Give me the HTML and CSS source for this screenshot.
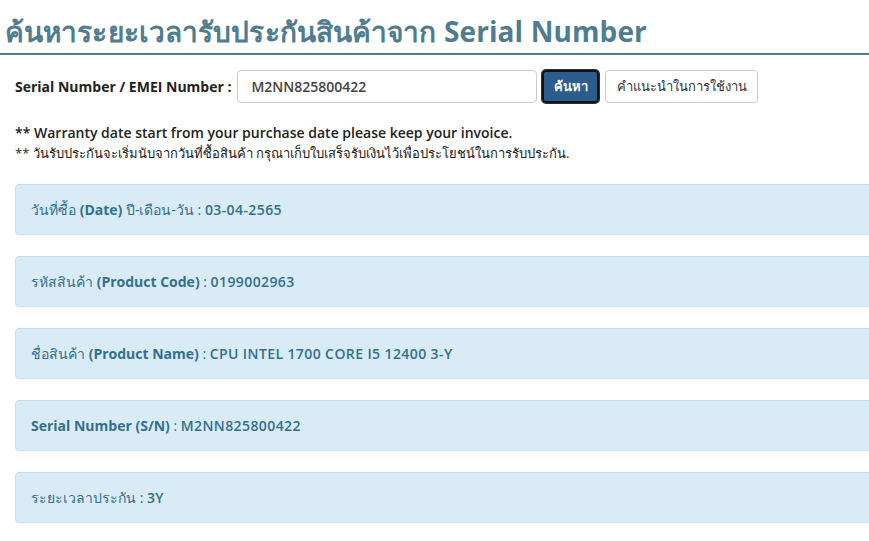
FILE: index.html
```html
<!DOCTYPE html>
<html lang="th">
<head>
<meta charset="utf-8">
<title>ค้นหาระยะเวลารับประกันสินค้า</title>
<link rel="stylesheet" href="styles.css">
</head>
<body>
<div class="page">
  <h1 class="title">ค้นหาระยะเวลารับประกันสินค้าจาก Serial Number</h1>
  <form class="search-row">
    <label class="search-label" for="sn">Serial Number / EMEI Number :</label>
    <input class="search-input" id="sn" type="text" value="M2NN825800422">
    <button class="btn btn-primary" type="button">ค้นหา</button>
    <button class="btn btn-default" type="button">คำแนะนำในการใช้งาน</button>
  </form>
  <div class="notes">
    <p class="note-en">** Warranty date start from your purchase date please keep your invoice.</p>
    <p class="note-th">** วันรับประกันจะเริ่มนับจากวันที่ซื้อสินค้า กรุณาเก็บใบเสร็จรับเงินไว้เพื่อประโยชน์ในการรับประกัน.</p>
  </div>
  <div class="results">
    <div class="panel"><span class="k">วันที่ซื้อ <b>(Date)</b> ปี-เดือน-วัน :</span> <span class="v">03-04-2565</span></div>
    <div class="panel"><span class="k">รหัสสินค้า <b>(Product Code)</b> :</span> <span class="v">0199002963</span></div>
    <div class="panel"><span class="k">ชื่อสินค้า <b>(Product Name)</b> :</span> <span class="v">CPU INTEL 1700 CORE I5 12400 3-Y</span></div>
    <div class="panel"><span class="k"><b>Serial Number (S/N)</b> :</span> <span class="v">M2NN825800422</span></div>
    <div class="panel"><span class="k">ระยะเวลาประกัน :</span> <span class="v">3Y</span></div>
  </div>
</div>
</body>
</html>
```

FILE: styles.css
```css
html, body {
  margin: 0;
  padding: 0;
  background: #fff;
}
body {
  font-family: "Open Sans", "DejaVu Sans", sans-serif;
  color: #222;
}
.page {
  overflow: hidden;
  height: 541px;
}
.title {
  margin: 0;
  padding: 13px 0 4px 5px;
  font-size: 28px;
  line-height: 36px;
  font-weight: bold;
  color: #4f7d8f;
  border-bottom: 2px solid #4f7d8f;
  letter-spacing: 0.1px;
}
.search-row {
  display: flex;
  align-items: center;
  margin: 15px 0 0 15px;
}
.search-label {
  font-size: 14px;
  font-weight: bold;
  color: #222;
  margin-right: 6px;
}
.search-input {
  box-sizing: border-box;
  width: 300px;
  height: 33px;
  border: 1px solid #ccc;
  border-radius: 4px;
  padding: 0 13px;
  font: 600 14px "Open Sans", "DejaVu Sans", sans-serif;
  color: #444;
}
.btn {
  box-sizing: border-box;
  height: 33px;
  border-radius: 4px;
  font-size: 13px;
  font-family: "Open Sans", "DejaVu Sans", sans-serif;
  padding: 0;
  white-space: nowrap;
}
.btn-primary {
  margin-left: 5px;
  width: 57px;
  background: #2c5c8c;
  color: #fff;
  border: 1px solid #fff;
  outline: 2px solid #111;
  outline-offset: -2px;
  box-shadow: 0 0 0 1px #1b3550;
  font-weight: bold;
}
.btn-default {
  margin-left: 6px;
  width: 153px;
  background: #fff;
  color: #333;
  border: 1px solid #ccc;
}
.notes {
  margin: 20px 0 0 15px;
}
.notes p {
  margin: 0;
}
.note-en {
  font-size: 14px;
  font-weight: 600;
  line-height: 20px;
  color: #222;
}
.note-th {
  font-size: 13px;
  line-height: 20px;
  color: #222;
}
.results {
  margin: 21px -20px 0 15px;
}
.panel {
  box-sizing: border-box;
  height: 51px;
  line-height: 49px;
  padding: 0 15px;
  margin-bottom: 21px;
  background: #d9ebf7;
  border: 1px solid #bce3f1;
  border-radius: 4px;
  color: #31708f;
  font-size: 14px;
  white-space: nowrap;
}
.panel b {
  font-weight: bold;
}
.panel .v {
  font-weight: 600;
  letter-spacing: 0.4px;
}
```
